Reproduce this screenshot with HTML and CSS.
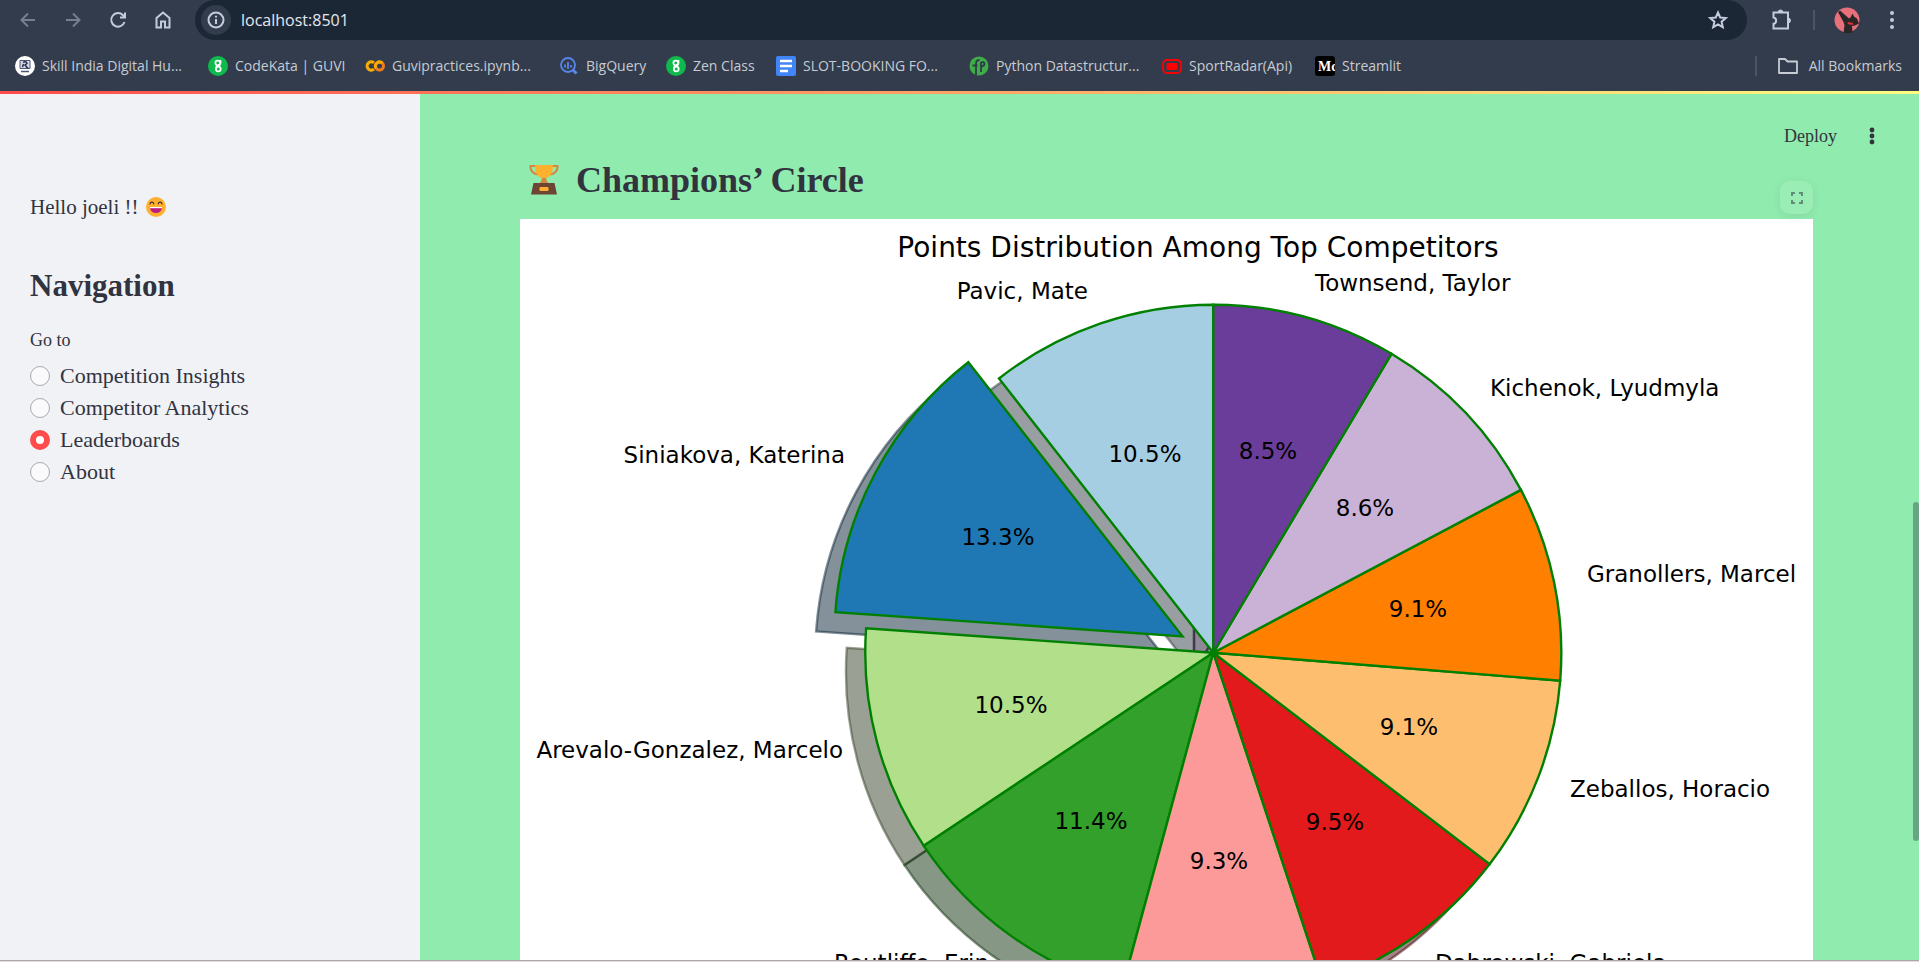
FILE: index.html
```html
<!DOCTYPE html>
<html lang="en">
<head>
<meta charset="utf-8">
<title>Leaderboards</title>
<link rel="stylesheet" href="styles.css">
</head>
<body>
<div class="window">
  <header class="browser">
    <div class="toolbar">
      <button class="tool dim" aria-label="Back"><svg width="18" height="18" viewBox="0 0 18 18"><path d="M16 9H3M9 2.500 2.500 9 9 15.500"/></svg></button>
      <button class="tool dim" aria-label="Forward"><svg width="18" height="18" viewBox="0 0 18 18"><path d="M2 9h13M9 2.500 15.500 9 9 15.500"/></svg></button>
      <button class="tool" aria-label="Reload"><svg width="18" height="18" viewBox="0 0 18 18"><path d="M15.500 11A6.800 6.800 0 1 1 14 4.200L16 6.500M16 1.500v5h-5"/></svg></button>
      <button class="tool" aria-label="Home"><svg width="18" height="18" viewBox="0 0 18 18"><path d="M2.500 16.500V7L9 1.500 15.500 7v9.500h-4.500v-6H7v6z"/></svg></button>
      <div class="omnibox">
        <button class="site" aria-label="Site information"><svg width="18" height="18" viewBox="0 0 18 18"><circle cx="9" cy="9" r="7.500"/><path d="M9 8v5M9 4.800v1.700"/></svg></button>
        <input class="url" aria-label="Address" value="localhost:8501">
        <button class="tool" aria-label="Bookmark this page"><svg width="20" height="20" viewBox="0 0 20 20"><path d="M10 2.500l2.200 5 5.600.500-4.200 3.700 1.200 5.500L10 14.300l-4.800 2.900 1.200-5.500L2.200 8l5.600-.500z"/></svg></button>
      </div>
      <button class="tool ext" aria-label="Extensions"><svg width="22" height="22" viewBox="0 0 22 22"><path d="M2.500 3.500h14.500v16H2.500v-4.700a3.200 3.200 0 0 0 0-6.300z"/><path class="knob" d="M7 3.500a2.500 2.500 0 0 1 5 0zM17 9a2.500 2.500 0 0 1 0 5z"/></svg></button>
      <span class="rule"></span>
      <button class="tool avatar" aria-label="Profile"><svg width="26" height="26" viewBox="0 0 26 26"><circle cx="13" cy="13" r="12.500" class="a-bg"/><path class="a-fg" d="M4 5 6 3.500l9 8 1.500-1 2-4 1.500 3 3 2 2 5-4 2-3 .500.500 6-4 1.500-5-.500 1-8-1-3z"/><path class="a-mouth" d="M14 15.500q2 2 5 1"/></svg></button>
      <button class="tool" aria-label="Menu"><svg class="solid" width="6" height="20" viewBox="0 0 6 20"><circle cx="3" cy="3" r="2"/><circle cx="3" cy="10" r="2"/><circle cx="3" cy="17" r="2"/></svg></button>
    </div>
    <nav class="bookmarks" aria-label="Bookmarks">
      <a href="#"><svg width="20" height="20" viewBox="0 0 20 20"><circle cx="10" cy="10" r="10" fill="#fff"/><path d="M5 4.500h10v8H5z" fill="#d5d8e6" stroke="#4c5575"/><path d="M8 6.500q3-2 4 1l-2 1.500 3 3.500M8.500 8l-1 3" fill="none" stroke="#27304f" stroke-width="1.500"/><path d="M6 15.500h8" stroke="#4c5575" stroke-width="1.500"/></svg>Skill India Digital Hu...</a>
      <a href="#"><svg width="20" height="20" viewBox="0 0 20 20"><circle cx="10" cy="10" r="10" fill="#0fba4d"/><g fill="none" stroke="#fff" stroke-width="1.700"><circle cx="9.700" cy="7" r="2.300"/><path d="M12.500 4v3.500c0 2.500-4.500 2-4.500 4"/><circle cx="10.300" cy="13" r="2.400"/></g></svg>CodeKata | GUVI</a>
      <a href="#"><svg width="20" height="20" viewBox="0 0 20 20"><g fill="none" stroke-width="3"><path d="M9 6.800a4.200 4.200 0 1 0 0 6.400" stroke="#f9ab00"/><circle cx="14.500" cy="10" r="4" stroke="#f27c1c"/><path d="M10.800 12a4.200 4.200 0 0 1 6.500-5" stroke="#f9ab00"/></g></svg>Guvipractices.ipynb...</a>
      <a href="#"><svg width="20" height="20" viewBox="0 0 20 20"><g fill="none" stroke="#5886ec" stroke-width="1.800"><circle cx="9" cy="9" r="7"/><path d="M14 14l3.500 3.500" stroke-width="3"/><path d="M6 8.500v3M9 6v7M12 9v2.500"/></g></svg>BigQuery</a>
      <a href="#"><svg width="20" height="20" viewBox="0 0 20 20"><circle cx="10" cy="10" r="10" fill="#0fba4d"/><g fill="none" stroke="#fff" stroke-width="1.700"><circle cx="9.700" cy="7" r="2.300"/><path d="M12.500 4v3.500c0 2.500-4.500 2-4.500 4"/><circle cx="10.300" cy="13" r="2.400"/></g></svg>Zen Class</a>
      <a href="#"><svg width="20" height="20" viewBox="0 0 20 20"><rect width="20" height="20" rx="2" fill="#4285f4"/><path d="M4 5h12M4 10h12M4 15h8" stroke="#fff" stroke-width="2.400"/></svg>SLOT-BOOKING FO...</a>
      <a href="#"><svg width="20" height="20" viewBox="0 0 20 20"><circle cx="10" cy="10" r="9.500" fill="#3fae49"/><g fill="none" stroke="#2f3b4b" stroke-width="1.800"><path d="M7 19V8c0-3 1-4 3.500-4M3.500 9.500h5M12 16V6.500c4-2 5 3 .500 4"/></g></svg>Python Datastructur...</a>
      <a href="#"><svg width="20" height="20" viewBox="0 0 20 20"><rect x="1" y="4" width="18" height="13" rx="4" fill="none" stroke="#f00" stroke-width="1.800"/><rect x="4.500" y="7" width="11" height="7" rx="1" fill="#f00"/></svg>SportRadar(Api)</a>
      <a href="#"><svg width="20" height="20" viewBox="0 0 20 20"><rect width="20" height="20" rx="3" fill="#000"/><text x="3" y="15" class="medium">Mc</text></svg>Streamlit</a>
      <span class="rule"></span>
      <a href="#" class="all"><svg width="22" height="20" viewBox="0 0 22 20"><path d="M2 3h6l2.500 2.500H20V17H2z" fill="none" stroke="#c7cbd3" stroke-width="1.800" stroke-linejoin="round"/></svg>All Bookmarks</a>
    </nav>
  </header>
  <div class="decoration"></div>
  <div class="app">
    <aside class="sidebar">
      <p class="hello">Hello joeli !!
        <svg width="20" height="20" viewBox="0 0 20 20" role="img" aria-label="Grinning face"><circle cx="10" cy="10" r="10" fill="#ffb02e"/><path d="M4 10.500h12a6 5.500 0 0 1-12 0z" fill="#bb1d80"/><path d="M4 10h12v1.200H4z" fill="#fff"/><path d="M4 7c.500-2.500 3.300-2.500 3.800 0M12.200 7c.500-2.500 3.300-2.500 3.800 0" fill="none" stroke="#402a32" stroke-width="1.200" stroke-linecap="round"/></svg>
      </p>
      <h2 class="nav-title">Navigation</h2>
      <fieldset class="nav">
        <legend>Go to</legend>
        <label><input type="radio" name="page">Competition Insights</label>
        <label><input type="radio" name="page">Competitor Analytics</label>
        <label><input type="radio" name="page" checked>Leaderboards</label>
        <label><input type="radio" name="page">About</label>
      </fieldset>
    </aside>
    <main class="main">
      <div class="topbar">
        <button class="deploy">Deploy</button>
        <button class="more" aria-label="Main menu"><svg width="6" height="18" viewBox="0 0 6 18"><circle cx="3" cy="3" r="2.400"/><circle cx="3" cy="9" r="2.400"/><circle cx="3" cy="15" r="2.400"/></svg></button>
      </div>
      <section class="content">
        <h2 class="title">
          <svg width="30" height="30" viewBox="0 0 30 30" role="img" aria-label="Trophy"><path d="M7 1H1.500C1 6 5 9 9 9.500M23 1h5.500C29 6 25 9 21 9.500" fill="none" stroke="#d3883e" stroke-width="2"/><path d="M13 12h4c0 3 1 5 3 6.500H10c2-1.500 3-3.500 3-6.500z" fill="#d3883e"/><path d="M6 0h18c0 7-2 13-9 13S6 7 6 0z" fill="#ffb02e"/><path d="M4.500 18h21L28 29.500H2z" fill="#6d4534"/><rect x="10.500" y="22" width="9" height="4" rx="1" fill="#ffb02e"/></svg>
          Champions’ Circle
        </h2>
        <figure class="chart">
          <button class="fullscreen" aria-label="View fullscreen"><svg width="12" height="12" viewBox="0 0 12 12"><path d="M1 4V1h3M8 1h3v3M11 8v3H8M4 11H1V8"/></svg></button>
          <svg class="pie" viewBox="0 0 1293 880" role="img" aria-label="Points distribution among top competitors">
            <defs>
              <path id="w0" d="M0 0V-348A348 348 0 0 0-214.300-274.200Z"/>
              <path id="w1" d="M-30.700-16.300l-214.300-274.200a348 348 0 0 0-132.900 249.900Z"/>
              <path id="w2" d="M0 0L-347.200-24.300A348 348 0 0 0-289.500 193.100Z"/>
              <path id="w3" d="M0 0L-289.500 193.100A348 348 0 0 0-91.200 335.800Z"/>
              <path id="w4" d="M0 0L-91.200 335.800A348 348 0 0 0 109.300 330.400Z"/>
              <path id="w5" d="M0 0L109.300 330.400A348 348 0 0 0 276.400 211.400Z"/>
              <path id="w6" d="M0 0L276.400 211.400A348 348 0 0 0 346.900 27.900Z"/>
              <path id="w7" d="M0 0L346.900 27.900A348 348 0 0 0 307.600-162.800Z"/>
              <path id="w8" d="M0 0L307.600-162.800A348 348 0 0 0 178.200-298.900Z"/>
              <path id="w9" d="M0 0L178.200-298.900A348 348 0 0 0 0-348Z"/>
            </defs>
            <g class="shadows" transform="translate(674 453)">
              <use href="#w0" class="s0"/><use href="#w1" class="s1"/><use href="#w2" class="s2"/><use href="#w3" class="s3"/><use href="#w4" class="s4"/><use href="#w5" class="s5"/><use href="#w6" class="s6"/><use href="#w7" class="s7"/><use href="#w8" class="s8"/><use href="#w9" class="s9"/>
            </g>
            <g class="wedges" transform="translate(693.300 433.700)">
              <use href="#w0" class="c0"/><use href="#w1" class="c1"/><use href="#w2" class="c2"/><use href="#w3" class="c3"/><use href="#w4" class="c4"/><use href="#w5" class="c5"/><use href="#w6" class="c6"/><use href="#w7" class="c7"/><use href="#w8" class="c8"/><use href="#w9" class="c9"/>
            </g>
            <text class="pie-title mid" x="678" y="38">Points Distribution Among Top Competitors</text>
            <g class="end">
              <text x="568" y="80">Pavic, Mate</text>
              <text x="325" y="244">Siniakova, Katerina</text>
              <text x="323" y="539">Arevalo-Gonzalez, Marcelo</text>
              <text x="469" y="752">Routliffe, Erin</text>
            </g>
            <g>
              <text x="795" y="72">Townsend, Taylor</text>
              <text x="970" y="177">Kichenok, Lyudmyla</text>
              <text x="1067" y="363">Granollers, Marcel</text>
              <text x="1050" y="578">Zeballos, Horacio</text>
              <text x="915" y="752">Dabrowski, Gabriela</text>
            </g>
            <g class="mid">
              <text x="625" y="243">10.5%</text>
              <text x="478" y="326">13.3%</text>
              <text x="491" y="494">10.5%</text>
              <text x="571" y="610">11.4%</text>
              <text x="699" y="650">9.3%</text>
              <text x="815" y="611">9.5%</text>
              <text x="889" y="516">9.1%</text>
              <text x="898" y="398">9.1%</text>
              <text x="845" y="297">8.6%</text>
              <text x="748" y="240">8.5%</text>
            </g>
          </svg>
        </figure>
      </section>
      <span class="thumb"></span>
    </main>
  </div>
  <div class="edge"></div>
</div>
</body>
</html>
```

FILE: styles.css
```css
* { box-sizing: border-box; }

body { margin: 0; }

button {
  margin: 0;
  padding: 0;
  border: 0;
  background: none;
  font: inherit;
  color: inherit;
}

.window {
  display: flex;
  flex-direction: column;
  height: 100vh;
  overflow: hidden;
  font-family: "Liberation Serif", serif;
  color: #31333f;
}

/* Browser chrome */
.browser {
  height: 91px;
  flex: none;
  background: #323c4c;
  color: #c7cbd3;
  font-family: "Open Sans", "Noto Sans", sans-serif;
}

.toolbar {
  display: flex;
  align-items: center;
  height: 40px;
  padding: 0 5px;
}

.tool {
  display: grid;
  place-items: center;
  width: 45px;
  height: 38px;
}

.tool svg,
.site svg {
  fill: none;
  stroke: #c3cbdc;
  stroke-width: 2;
}

.tool svg.solid { fill: #c3cbdc; stroke: none; }
.tool.dim svg { stroke: #767f8e; }

.omnibox {
  display: flex;
  align-items: center;
  flex: 1;
  height: 40px;
  margin-left: 10px;
  padding: 0 7px 0 6px;
  border-radius: 20px;
  background: #1c2736;
}

.site {
  display: grid;
  place-items: center;
  width: 30px;
  height: 30px;
  border-radius: 50%;
  background: #323c4c;
}

.url {
  flex: 1;
  margin: 0 0 0 10px;
  padding: 0;
  border: 0;
  background: none;
  color: #e4e8ee;
  font: 16px "Open Sans", "Noto Sans", sans-serif;
}

.ext { margin-left: 12px; }
.ext .knob { fill: #c3cbdc; stroke-width: 1; }

.toolbar .rule {
  width: 2px;
  height: 20px;
  margin: 0 9px;
  background: #4b5565;
}

.tool.avatar svg { stroke: none; }
.avatar .a-bg { fill: #e8707a; }
.avatar .a-fg { fill: #2a2628; }
.avatar .a-mouth { stroke: #e03038; stroke-width: 2; }

.bookmarks {
  display: grid;
  grid-template-columns: 193px 157px 194px 107px 110px 193px 193px 153px 1fr auto auto;
  align-items: center;
  height: 51px;
  padding: 0 17px 0 15px;
  font-size: 14px;
}

.bookmarks a {
  display: flex;
  align-items: center;
  gap: 7px;
  color: inherit;
  text-decoration: none;
  white-space: nowrap;
}

.bookmarks .all { gap: 10px; }

.bookmarks .rule {
  width: 2px;
  height: 20px;
  margin-right: 20px;
  background: #4b5565;
}

.medium {
  fill: #fff;
  font: bold 14px "Liberation Serif", serif;
}

.decoration {
  flex: none;
  height: 3px;
  background: linear-gradient(90deg, #ff4b4b, #fffd80);
}

/* App */
.app {
  display: flex;
  flex: 1;
  min-height: 0;
}

.sidebar {
  flex: none;
  width: 420px;
  padding: 97px 30px 0;
  background: #f0f2f6;
}

.hello {
  display: flex;
  align-items: center;
  gap: 8px;
  margin: 0;
  font-size: 21px;
  line-height: 32px;
}

.nav-title {
  margin: 45px 0 24px;
  font-size: 31px;
  line-height: 36px;
}

.nav {
  display: flex;
  flex-direction: column;
  margin: 0;
  padding: 0;
  border: 0;
  font-size: 22px;
}

.nav legend {
  margin-bottom: 8px;
  padding: 0;
  font-size: 18px;
  line-height: 24px;
}

.nav label {
  display: flex;
  align-items: center;
  gap: 10px;
  line-height: 32px;
}

.nav input {
  appearance: none;
  width: 20px;
  height: 20px;
  margin: 0;
  border: 1px solid #a9abb2;
  border-radius: 50%;
  background: #fafafc;
}

.nav input:checked {
  border: 6px solid #ff4b4b;
  background: #fff;
}

.main {
  position: relative;
  flex: 1;
  min-width: 0;
  overflow: hidden;
  background: #90ebae;
}

.topbar {
  display: flex;
  align-items: center;
  justify-content: flex-end;
  gap: 32px;
  height: 72px;
  padding: 12px 44px 0 0;
}

.deploy { font-size: 18px; }

.more svg {
  display: block;
  fill: #31333f;
}

.content { padding: 0 106px 0 100px; }

.title {
  display: flex;
  align-items: center;
  gap: 17px;
  height: 28px;
  margin: 0 0 25px;
  padding-left: 9px;
  font-size: 36px;
  line-height: 24px;
}

.chart {
  position: relative;
  margin: 0;
  background: #fff;
}

.fullscreen {
  position: absolute;
  top: -38px;
  right: 0;
  display: grid;
  place-items: center;
  width: 33px;
  height: 33px;
  border-radius: 10px;
  background: #9bedb6;
  box-shadow: 0 2px 8px #31333f18;
}

.fullscreen svg {
  fill: none;
  stroke: #5c8f75;
  stroke-width: 2;
}

.pie {
  display: block;
  width: 100%;
  height: auto;
  font-family: "DejaVu Sans", sans-serif;
  font-size: 23px;
}

.pie-title { font-size: 28px; }
.mid { text-anchor: middle; }
.end { text-anchor: end; }

.wedges { stroke: #008000; stroke-width: 2.4; }
.c0 { fill: #a6cee3; }
.c1 { fill: #1f78b4; }
.c2 { fill: #b2df8a; }
.c3 { fill: #33a02c; }
.c4 { fill: #fb9a99; }
.c5 { fill: #e31a1c; }
.c6 { fill: #fdbf6f; }
.c7 { fill: #ff7f00; }
.c8 { fill: #cab2d6; }
.c9 { fill: #6a3d9a; }

.shadows { stroke-width: 2.4; fill-opacity: 0.5; stroke-opacity: 0.5; }
.s0 { fill: #323e44; stroke: #323e44; }
.s1 { fill: #092436; stroke: #092436; }
.s2 { fill: #354329; stroke: #354329; }
.s3 { fill: #0f300d; stroke: #0f300d; }
.s4 { fill: #4b2e2e; stroke: #4b2e2e; }
.s5 { fill: #440808; stroke: #440808; }
.s6 { fill: #4c3921; stroke: #4c3921; }
.s7 { fill: #4d2600; stroke: #4d2600; }
.s8 { fill: #3d3540; stroke: #3d3540; }
.s9 { fill: #20122e; stroke: #20122e; }

.thumb {
  position: absolute;
  top: 408px;
  right: 0;
  width: 6px;
  height: 339px;
  border-radius: 4px;
  background: #69a583;
}

.edge {
  flex: none;
  height: 2px;
  border-top: 1px solid #aaa7aa;
  background: #e4dcde;
}
```
